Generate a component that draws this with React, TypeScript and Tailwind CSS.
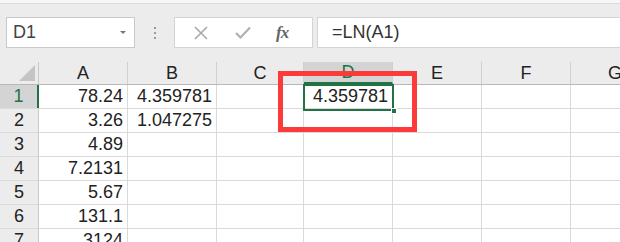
import React from 'react';

const cols = ['A', 'B', 'C', 'D', 'E', 'F', 'G'];
const widths = ['w-[89px]', 'w-[89px]', 'w-[87px]', 'w-[89px]', 'w-[89px]', 'w-[89px]', 'w-[89px]'];

const rows: string[][] = [
  ['78.24', '4.359781', '', '4.359781', '', '', ''],
  ['3.26', '1.047275', '', '', '', '', ''],
  ['4.89', '', '', '', '', '', ''],
  ['7.2131', '', '', '', '', '', ''],
  ['5.67', '', '', '', '', '', ''],
  ['131.1', '', '', '', '', '', ''],
  ['3124', '', '', '', '', '', ''],
];

export default function App() {
  return (
    <div className="relative w-[620px] h-[242px] overflow-hidden bg-white font-['Liberation_Sans',Arial,sans-serif] text-[#222]">
      {/* ribbon edge */}
      <div className="h-[4px] bg-[#f7f7f7] border-b border-[#dcdcdc]" />

      {/* formula bar */}
      <div className="h-[58px] bg-[#ececec] flex items-start pt-[13px]">
        <div className="ml-[6px] w-[129px] h-[31px] bg-white border border-[#c9c9c9] flex items-center justify-between pl-[6px] pr-[8px]">
          <span className="text-[18px] text-[#444]">D1</span>
          <span className="w-0 h-0 border-l-[3px] border-r-[3px] border-t-[3px] border-l-transparent border-r-transparent border-t-[#777]" />
        </div>
        <div className="w-[39px] h-[31px] flex flex-col items-center justify-center gap-[3px]">
          <span className="w-[2px] h-[2px] bg-[#9a9a9a]" />
          <span className="w-[2px] h-[2px] bg-[#9a9a9a]" />
          <span className="w-[2px] h-[2px] bg-[#9a9a9a]" />
        </div>
        <div className="w-[139px] h-[31px] bg-white border border-[#d4d4d4] flex items-center">
          <svg width="14" height="14" viewBox="0 0 14 14" className="ml-[19px]">
            <path d="M1 1 L13 13 M13 1 L1 13" stroke="#a8a8a8" strokeWidth="1.6" fill="none" />
          </svg>
          <svg width="16" height="13" viewBox="0 0 16 13" className="ml-[27px]">
            <path d="M1 7 L5.5 11.5 L15 1.5" stroke="#b0b0b0" strokeWidth="2.2" fill="none" />
          </svg>
          <span className="ml-[25px] text-[17px] italic font-bold text-[#666] font-['Liberation_Serif',serif] tracking-[-1px]">fx</span>
        </div>
        <div className="ml-[4px] flex-1 h-[31px] bg-white border border-[#d4d4d4] border-r-0 flex items-center pl-[14px]">
          <span className="text-[18px] text-[#333]">=LN(A1)</span>
        </div>
      </div>

      {/* column headers */}
      <div className="flex h-[23px] bg-[#ececec] border-b border-[#b8b8b8]">
        <div className="w-[39px] shrink-0 border-r border-[#c8c8c8] flex items-end justify-end pr-[3px] pb-[3px]">
          <span className="w-0 h-0 border-l-[16px] border-t-[16px] border-l-transparent border-t-transparent border-r-0 border-b-0 [border-bottom:16px_solid_#c4c4c4]" style={{}} />
        </div>
        {cols.map((c, i) => (
          <div
            key={c}
            className={`${widths[i]} shrink-0 border-r border-[#d0d0d0] flex items-center justify-center text-[18px] ${
              c === 'D' ? 'bg-[#d4d4d4] text-[#217346] border-b-2 border-b-[#217346]' : ''
            }`}
          >
            {c}
          </div>
        ))}
      </div>

      {/* rows */}
      {rows.map((r, ri) => (
        <div key={ri} className="flex h-[24px] border-b border-[#dadada]">
          <div
            className={`w-[39px] shrink-0 flex items-center justify-center text-[18px] ${
              ri === 0 ? 'bg-[#d4d4d4] text-[#217346] border-r-2 border-[#217346]' : 'bg-[#ececec] border-r border-[#c8c8c8]'
            }`}
          >
            {ri + 1}
          </div>
          {r.map((v, ci) => (
            <div
              key={ci}
              className={`${widths[ci]} shrink-0 border-r border-[#dadada] flex items-center justify-end pr-[4px] text-[18px] text-[#222]`}
            >
              {v}
            </div>
          ))}
        </div>
      ))}

      {/* active cell D1 */}
      <div className="absolute left-[303px] top-[84px] w-[91px] h-[27px] border-2 border-[#217346]" />
      <div className="absolute left-[391px] top-[108px] w-[6px] h-[6px] bg-[#217346] border border-white" />

      {/* red highlight */}
      <div className="absolute left-[278px] top-[71px] w-[139px] h-[61px] border-[5px] border-[#fd3a3a]" />
    </div>
  );
}
